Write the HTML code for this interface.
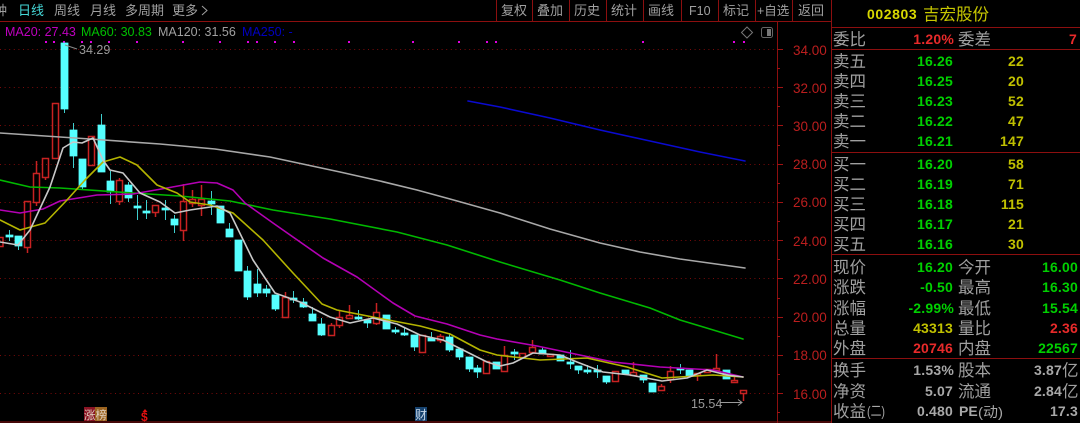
<!DOCTYPE html>
<html><head><meta charset="utf-8">
<style>
html,body{margin:0;padding:0;background:#000;width:1080px;height:423px;overflow:hidden}
svg{display:block}
text{font-family:"Liberation Sans","Noto Sans CJK SC",sans-serif}
.tb{font-size:13px;fill:#a0a0a0}
.ax{font-size:13.5px;fill:#bb1e1e}
.lb{font-size:16.5px;fill:#a0a0a0}
.n{font-size:14px;font-weight:bold;text-anchor:end;letter-spacing:.2px}
.g{fill:#00d000}.y{fill:#c0c000}.r{fill:#e82a2a}.w{fill:#a8a8a8}
.l{fill:none;stroke-width:1.6;stroke-linejoin:round;stroke-linecap:round}
</style></head><body>
<svg width="1080" height="423" viewBox="0 0 1080 423" xmlns="http://www.w3.org/2000/svg">
<rect width="1080" height="423" fill="#000"/>
<!-- dotted grid -->
<path d="M0 49.5H777M0 87.5H777M0 125.5H777M0 164.5H777M0 202.5H777M0 240.5H777M0 278.5H777M0 317.5H777M0 355.5H777M0 393.5H777" stroke="#7a0a0a" stroke-width="1" stroke-dasharray="1 3.6" fill="none"/>
<!-- frame lines -->
<path d="M0 21.5H831M777.5 21V423M0 422H831M831.5 0V423M831 27.5H1080M831 49.5H1080M831 152.5H1080M831 254.5H1080M831 358.5H1080" stroke="#8c0f0f" stroke-width="1" fill="none"/>
<path d="M496.5 0V21M532.5 0V21M569.5 0V21M606.5 0V21M643.5 0V21M681.5 0V21M718.5 0V21M755.5 0V21M792.5 0V21" stroke="#8c0f0f" stroke-width="1"/>
<!-- axis ticks -->
<path d="M777 49.5h6M777 87.5h6M777 125.5h6M777 164.5h6M777 202.5h6M777 240.5h6M777 278.5h6M777 317.5h6M777 355.5h6M777 393.5h6M777 68.5h3M777 106.5h3M777 145.5h3M777 183.5h3M777 221.5h3M777 259.5h3M777 298.5h3M777 336.5h3M777 374.5h3M777 412.5h3" stroke="#a01212" stroke-width="1"/>
<text class="ax" x="793" y="55">34.00</text>
<text class="ax" x="793" y="93">32.00</text>
<text class="ax" x="793" y="131">30.00</text>
<text class="ax" x="793" y="169">28.00</text>
<text class="ax" x="793" y="207">26.00</text>
<text class="ax" x="793" y="246">24.00</text>
<text class="ax" x="793" y="284">22.00</text>
<text class="ax" x="793" y="322">20.00</text>
<text class="ax" x="793" y="360">18.00</text>
<text class="ax" x="793" y="399">16.00</text>
<!-- toolbar -->
<text class="tb" x="-6" y="15">钟</text>
<text class="tb" x="18" y="15" style="fill:#45d8d8">日线</text>
<text class="tb" x="54" y="15">周线</text>
<text class="tb" x="90" y="15">月线</text>
<text class="tb" x="125" y="15">多周期</text>
<text class="tb" x="172" y="15">更多</text>
<path d="M202 6l5 4.5-5 4.5" fill="none" stroke="#a0a0a0" stroke-width="1"/>
<text class="tb" x="501" y="15">复权</text>
<text class="tb" x="537" y="15">叠加</text>
<text class="tb" x="574" y="15">历史</text>
<text class="tb" x="611" y="15">统计</text>
<text class="tb" x="648" y="15">画线</text>
<text class="tb" x="689" y="15" style="font-size:12.5px">F10</text>
<text class="tb" x="723" y="15">标记</text>
<text class="tb" x="757" y="15" style="font-size:12.5px">+自选</text>
<text class="tb" x="798" y="15">返回</text>
<!-- MA legend -->
<text x="5" y="36" style="font-size:12.5px;fill:#c000c0">MA20: 27.43</text>
<text x="81" y="36" style="font-size:12.5px;fill:#00c000">MA60: 30.83</text>
<text x="158" y="36" style="font-size:12.5px;fill:#a0a0a0">MA120: 31.56</text>
<text x="242" y="36" style="font-size:12.5px;fill:#0000c0">MA250: -</text>
<path d="M747 27l5.5 5.5-5.5 5.5-5.5-5.5z" fill="none" stroke="#777" stroke-width="1"/>
<rect x="761.5" y="27.5" width="11" height="10" rx="2" fill="none" stroke="#666"/>
<rect x="767" y="29" width="4" height="7" fill="#777"/>
<!-- signal dots -->
<g fill="#e000e0">
<rect x="45" y="41" width="2" height="2"/><rect x="53" y="41" width="2" height="2"/><rect x="63" y="41" width="2" height="2"/><rect x="81" y="41" width="2" height="2"/><rect x="90" y="41" width="2" height="2"/><rect x="108" y="41" width="2" height="2"/><rect x="136" y="41" width="2" height="2"/><rect x="182" y="41" width="2" height="2"/><rect x="219" y="41" width="2" height="2"/><rect x="247" y="41" width="2" height="2"/><rect x="256" y="41" width="2" height="2"/><rect x="274" y="41" width="2" height="2"/><rect x="293" y="41" width="2" height="2"/><rect x="348" y="41" width="2" height="2"/><rect x="412" y="41" width="2" height="2"/><rect x="458" y="41" width="2" height="2"/><rect x="486" y="41" width="2" height="2"/><rect x="495" y="41" width="2" height="2"/><rect x="642" y="41" width="2" height="2"/><rect x="733" y="41" width="2" height="2"/><rect x="743" y="41" width="2" height="2"/>
</g>
<!-- cyan candles -->
<path d="M9.5 230V241M146.5 200V219M137.5 195V220M165.5 200V220M174.5 215V233M211.5 191V215M229.5 223V237M247.5 266V300M257.5 269V297M266.5 285V297M275.5 295V311M293.5 291V303M303.5 298V308M312.5 307V321M321.5 318V336M358.5 310V320M367.5 320V328M395.5 327V334M404.5 328V336M414.5 335V351M431.5 332V341M449.5 333V352M459.5 349V360M469.5 357V372M477.5 365V378M514.5 349V360M542.5 347V354M570.5 350V369M578.5 366V374M587.5 365V374M597.5 365V378M606.5 376V384M643.5 375V383M680.5 364V374M64.5 100V113M73.5 123V168M82.5 180V190M101.5 114V130M110.5 171V204M128.5 182V202M18.5 240V250" stroke="#3fcfcf" stroke-width="1" fill="none"/>
<path fill="#55ffff" stroke="#55ffff" stroke-width=".8" d="M6 235h7v2h-7zM15 236h7v10h-7zM61 43h7v66h-7zM70 130h7v26h-7zM79 159h7v28h-7zM98 125h7v47h-7zM107 181h7v11h-7zM125 185h7v13h-7zM134 206h7v2h-7zM143 211h7v2h-7zM162 208h7v2h-7zM171 219h7v6h-7zM208 201h7v3h-7zM217 206h7v17h-7zM226 229h7v8h-7zM235 240h7v31h-7zM244 271h7v26h-7zM254 284h7v9h-7zM263 289h7v4h-7zM272 295h7v14h-7zM290 298h7v2h-7zM300 302h7v5h-7zM309 314h7v7h-7zM318 324h7v11h-7zM355 317h7v2h-7zM364 320h7v3h-7zM383 315h7v14h-7zM392 330h7v2h-7zM401 333h7v2h-7zM411 335h7v12h-7zM428 338h7v3h-7zM446 337h7v13h-7zM456 349h7v8h-7zM466 357h7v12h-7zM474 368h7v4h-7zM493 362h7v7h-7zM511 352h7v2h-7zM539 350h7v4h-7zM557 355h7v6h-7zM567 362h7v2h-7zM575 366h7v4h-7zM584 370h7v2h-7zM594 370h7v2h-7zM603 376h7v6h-7zM622 370h7v4h-7zM640 375h7v5h-7zM649 383h7v9h-7zM677 368h7v2h-7zM686 370h7v6h-7zM723 370h7v9h-7z"/>
<!-- red candles -->
<path fill="none" stroke="#c82222" stroke-width="1.5" d="M-3 237.5h6v9h-6zM24.5 201.5h6v46h-6zM27.5 247v6M33.5 173.5h6v29h-6zM36.5 161v12M36.5 202v4M42.5 158.5h6v19h-6zM45.5 177v3M52.5 103.5h6v55h-6zM88.5 136.5h6v29h-6zM116.5 180.500h6v21h-6zM119.5 178v3M119.5 201v4M152.5 205.5h6v7h-6zM155.5 212v5M180.5 201.5h6v29h-6zM183.5 184v17M183.5 230v11M189.5 199.5h6v4h-6zM192.5 190v9M192.5 203v4M198.5 199.5h6v6h-6zM201.5 185v14M201.5 205v11M282.5 297.5h6v20h-6zM285.5 292v5M328.5 325.5h6v10h-6zM331.5 323v3M336.5 317.5h6v8h-6zM339.5 311v6M339.5 325v3M346.5 315.5h6v3h-6zM349.5 305v10M373.5 312.5h6v11h-6zM376.5 303v9M376.5 323v2M419.5 335.5h6v17h-6zM437.5 336.5h6v4h-6zM440.5 334v3M440.5 340v3M483.5 361.5h6v12h-6zM501.5 355.5h6v16h-6zM504.5 346v9M519.5 353.5h6v4h-6zM529.5 347.5h6v5h-6zM532.5 340v7M547.5 354.5h6v2h-6zM612.5 371.5h6v10h-6zM630.5 372.5h6v3h-6zM633.5 362v10M658.5 386.5h6v4h-6zM661.5 384v2M667.5 371.5h6v8h-6zM670.5 366v5M670.5 379v4M694.5 373.5h6v2h-6zM697.5 375v6M704.5 369.5h6v3h-6zM713.5 368.5h6v2h-6zM716.5 354v14M731.5 380.5h6v2h-6zM734.5 377v3M740.5 390.5h6v3h-6zM743.5 393v8"/>
<!-- MA lines -->
<polyline class="l" stroke="#0a0ad0" points="468,101 500,107 550,118 600,130 650,141 700,152 745,161"/>
<polyline class="l" stroke="#a8a8a8" points="0,133 45,136 90,139 160,144 215,149 270,157 340,172 380,181 417,190 450,199 500,213 550,229 600,243 640,252 680,259 745,268"/>
<polyline class="l" stroke="#00b800" points="0,180 30,187 60,188 133,193 180,196 230,201 273,210 330,219 397,232 447,245 500,262 560,280 600,293 650,308 680,320 700,326 743,339"/>
<polyline class="l" stroke="#b400b4" points="0,210 20,213 43,209 60,201 97,195 133,194 167,188 200,182 217,183 233,190 245,203 273,223 323,258 357,277 393,303 415,316 447,324 480,335 497,339 537,346 575,354 613,362 660,367 713,370 743,377"/>
<polyline class="l" stroke="#b4b400" points="0,220 20,230 45,223 67,200 85,180 103,162 120,157 137,165 157,185 177,193 190,202 210,205 233,213 263,240 293,273 322,304 337,310 383,319 420,326 450,334 480,350 497,355 540,360 587,358 627,367 662,378 713,375 743,377"/>
<polyline class="l" stroke="#c8c8c8" points="0,242 18,245 30,230 50,187 63,148 73,142 82,143 93,138 103,160 110,170 123,173 140,193 160,202 175,213 190,210 217,206 230,213 253,260 275,293 300,302 330,317 350,323 373,318 397,324 420,335 443,340 463,350 487,362 500,366 513,363 533,353 560,355 577,362 603,372 630,375 662,381 687,378 707,370 727,375 743,377"/>
<!-- annotations -->
<path d="M65 45l12 4" stroke="#888" stroke-width="1" fill="none"/>
<text x="79" y="54" style="font-size:12.5px;fill:#999">34.29</text>
<text x="691" y="408" style="font-size:12.5px;fill:#999">15.54</text>
<path d="M720 402.5h22M738 399.5l4 3-4 3" stroke="#999" stroke-width="1" fill="none"/>
<!-- bottom badges -->
<rect x="84" y="407" width="11" height="14" fill="#8a1424"/>
<rect x="95" y="407" width="12" height="14" fill="#9c6420"/>
<text x="84" y="419" style="font-size:11.5px;fill:#e0d0c0">涨榜</text>
<text x="141" y="421" style="font-size:12px;font-weight:bold;fill:#e01010">$</text>
<path d="M145 409l-2.5 3h5z" fill="#e01010"/>
<rect x="415" y="407" width="12" height="14" fill="#16426e"/>
<text x="415" y="419" style="font-size:12px;fill:#c8d8e8">财</text>
<!-- right panel -->
<text x="867" y="19" style="font-size:14px;font-weight:bold;fill:#d8d800;letter-spacing:.6px">002803</text>
<text x="923" y="20" style="font-size:16.5px;fill:#c8c800">吉宏股份</text>

<text class="lb" x="833" y="45">委比</text><text class="n r" x="954" y="44">1.20%</text>
<text class="lb" x="958" y="45">委差</text><text class="n r" x="1077" y="44">7</text>

<text class="lb" x="833" y="67">卖五</text><text class="n g" x="953" y="66">16.26</text><text class="n y" x="1024" y="66">22</text>
<text class="lb" x="833" y="87">卖四</text><text class="n g" x="953" y="86">16.25</text><text class="n y" x="1024" y="86">20</text>
<text class="lb" x="833" y="107">卖三</text><text class="n g" x="953" y="106">16.23</text><text class="n y" x="1024" y="106">52</text>
<text class="lb" x="833" y="127">卖二</text><text class="n g" x="953" y="126">16.22</text><text class="n y" x="1024" y="126">47</text>
<text class="lb" x="833" y="147">卖一</text><text class="n g" x="953" y="146">16.21</text><text class="n y" x="1024" y="146">147</text>

<text class="lb" x="833" y="170">买一</text><text class="n g" x="953" y="169">16.20</text><text class="n y" x="1024" y="169">58</text>
<text class="lb" x="833" y="190">买二</text><text class="n g" x="953" y="189">16.19</text><text class="n y" x="1024" y="189">71</text>
<text class="lb" x="833" y="210">买三</text><text class="n g" x="953" y="209">16.18</text><text class="n y" x="1024" y="209">115</text>
<text class="lb" x="833" y="230">买四</text><text class="n g" x="953" y="229">16.17</text><text class="n y" x="1024" y="229">21</text>
<text class="lb" x="833" y="250">买五</text><text class="n g" x="953" y="249">16.16</text><text class="n y" x="1024" y="249">30</text>

<text class="lb" x="833" y="273">现价</text><text class="n g" x="953" y="272">16.20</text><text class="lb" x="958" y="273">今开</text><text class="n g" x="1078" y="272">16.00</text>
<text class="lb" x="833" y="293">涨跌</text><text class="n g" x="953" y="292">-0.50</text><text class="lb" x="958" y="293">最高</text><text class="n g" x="1078" y="292">16.30</text>
<text class="lb" x="833" y="314">涨幅</text><text class="n g" x="954" y="313">-2.99%</text><text class="lb" x="958" y="314">最低</text><text class="n g" x="1078" y="313">15.54</text>
<text class="lb" x="833" y="334">总量</text><text class="n y" x="953" y="333">43313</text><text class="lb" x="958" y="334">量比</text><text class="n r" x="1078" y="333">2.36</text>
<text class="lb" x="833" y="354">外盘</text><text class="n r" x="953" y="353">20746</text><text class="lb" x="958" y="354">内盘</text><text class="n g" x="1078" y="353">22567</text>

<text class="lb" x="833" y="376">换手</text><text class="n w" x="954" y="375">1.53%</text><text class="lb" x="958" y="376">股本</text><text class="n w" x="1062" y="375">3.87</text><text class="lb" x="1062" y="376">亿</text>
<text class="lb" x="833" y="397">净资</text><text class="n w" x="953" y="396">5.07</text><text class="lb" x="958" y="397">流通</text><text class="n w" x="1062" y="396">2.84</text><text class="lb" x="1062" y="397">亿</text>
<text class="lb" x="833" y="417">收益</text><text x="867" y="416" style="font-size:14px;fill:#a8a8a8" textLength="18" lengthAdjust="spacingAndGlyphs">(二)</text><text class="n w" x="953" y="416">0.480</text>
<text x="959" y="416" style="font-size:14px;font-weight:bold;fill:#a8a8a8">PE</text><text x="978" y="417" style="font-size:14px;fill:#a8a8a8" textLength="25" lengthAdjust="spacingAndGlyphs">(动)</text><text class="n w" x="1078" y="416">17.3</text>
</svg>
</body></html>
